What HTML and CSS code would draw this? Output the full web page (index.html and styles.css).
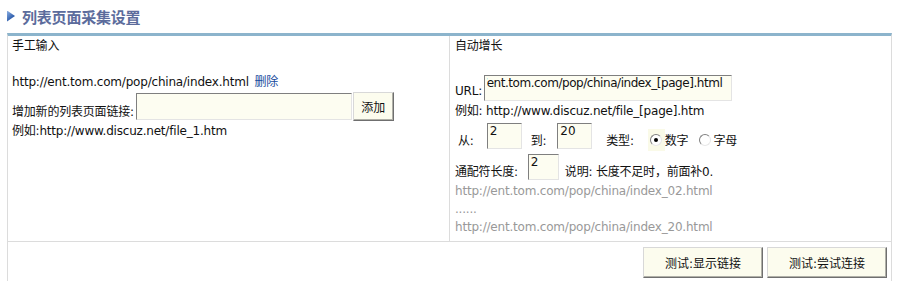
FILE: index.html
```html
<!DOCTYPE html>
<html lang="zh-CN">
<head>
    <meta charset="UTF-8">
    <title>列表页面采集设置</title>
    <link rel="stylesheet" href="styles.css">
</head>
<body>
  <div class="page">
    <div class="title"><span class="arrow"></span>列表页面采集设置</div>

    <div class="panel">
      <div class="cols">
        <div class="cell left">
          <div class="line">手工输入</div>
          <div class="line"></div>
          <div class="line">http://ent.tom.com/pop/china/index.html <a class="del" href="#">删除</a></div>
          <div class="row add-row">
            <span class="lbl">增加新的列表页面链接:</span>
            <input type="text" class="field add-field">
            <button class="btn add-btn">添加</button>
          </div>
          <div class="line">例如:http://www.discuz.net/file_1.htm</div>
        </div>

        <div class="cell right">
          <div class="line">自动增长</div>
          <div class="line"></div>
          <div class="row url-row">
            <span class="lbl">URL:</span>
            <input type="text" class="field url-field" value="/ent.tom.com/pop/china/index_[page].html">
          </div>
          <div class="line">例如: http://www.discuz.net/file_[page].htm</div>
          <div class="row range-row">
            <span class="lbl from">从:</span>
            <input type="text" class="field num" value="2">
            <span class="lbl to">到:</span>
            <input type="text" class="field num" value="20">
            <span class="lbl kind">类型:</span>
            <span class="opt on"><span class="radio checked"></span></span>
            <span class="lbl">数字</span>
            <span class="opt"><span class="radio"></span></span>
            <span class="lbl">字母</span>
          </div>
          <div class="row len-row">
            <span class="lbl">通配符长度:</span>
            <input type="text" class="field num short" value="2">
            <span class="lbl note">说明: 长度不足时，前面补0.</span>
          </div>
          <div class="line muted">http://ent.tom.com/pop/china/index_02.html</div>
          <div class="line muted">......</div>
          <div class="line muted">http://ent.tom.com/pop/china/index_20.html</div>
        </div>
      </div>

      <div class="actions">
        <button class="btn big">测试:显示链接</button>
        <button class="btn big">测试:尝试连接</button>
      </div>
    </div>
  </div>
</body>
</html>
```

FILE: styles.css
```css
body {
  margin: 0;
  background: #fff;
  font-family: "DejaVu Sans", "Noto Sans CJK SC", sans-serif;
  font-size: 12px;
  letter-spacing: -0.2px;
  color: #111;
}

.page {
  padding: 0 7px;
}

.title {
  display: flex;
  align-items: center;
  padding-top: 6px;
  height: 20px;
  margin-bottom: 7px;
  font-family: "Noto Sans CJK SC", sans-serif;
  font-size: 15px;
  font-weight: bold;
  letter-spacing: -0.2px;
  color: #5c6c9c;
}

.arrow {
  width: 8px;
  height: 11px;
  margin-right: 7px;
  background: linear-gradient(135deg, #8fb2e4, #2354a6 70%);
  clip-path: polygon(0 0, 100% 50%, 0 100%);
}

.panel {
  width: 883px;
  border-top: 3px solid #8cb4cc;
  border-left: 1px solid #dcdcdc;
  border-right: 1px solid #dcdcdc;
}

.cols {
  display: grid;
  grid-template-columns: 442px 441px;
  border-bottom: 1px solid #dcdcdc;
}

.cell {
  padding: 1px 4px 5px;
}

.cell.left {
  border-right: 1px solid #dcdcdc;
}

.cell.right {
  padding-left: 5px;
}

.line {
  height: 18px;
  line-height: 18px;
  white-space: nowrap;
}

.muted {
  color: #999;
}

.del {
  margin-left: 2px;
  color: #164a9c;
  text-decoration: none;
}

.row {
  display: flex;
  align-items: flex-end;
  white-space: nowrap;
}

.lbl {
  line-height: 18px;
}

.add-row {
  height: 31px;
  padding-bottom: 1px;
  box-sizing: border-box;
}

.url-row {
  height: 29px;
}

.url-row .lbl {
  margin-bottom: 2px;
  margin-right: 2px;
}

.range-row,
.len-row {
  height: 31px;
}

.range-row .lbl,
.len-row .lbl {
  margin-bottom: 1px;
}

.field {
  box-sizing: border-box;
  height: 26px;
  margin: 0 0 2px;
  padding: 0 2px 10px;
  border: 1px solid;
  border-color: #7f7f7f #e4e4e4 #e4e4e4 #7f7f7f;
  background: #fdfdf1;
  font: inherit;
  line-height: 14px;
  color: #111;
  outline: none;
}

.add-field {
  width: 216px;
  height: 27px;
  margin: 0 0 1px 2px;
}

.url-field {
  width: 248px;
  margin-bottom: 1px;
  letter-spacing: -0.45px;
  text-indent: -4px;
}

.num {
  width: 35px;
}

.num.short {
  width: 31px;
  margin-left: 10px;
}

.from {
  margin-left: 3px;
}

.range-row .num:first-of-type {
  margin-left: 13px;
}

.to {
  margin-left: 9px;
}

.to + .num {
  margin-left: 11px;
}

.kind {
  margin-left: 14px;
}

.opt {
  display: flex;
  align-items: center;
  justify-content: center;
  width: 17px;
  height: 22px;
  margin: 0 0 0 14px;
  background: #fafae8;
}

.opt + .lbl + .opt {
  margin-left: 8px;
  background: #fff;
}

.radio {
  box-sizing: border-box;
  position: relative;
  width: 12px;
  height: 12px;
  border-radius: 50%;
  border: 1px solid;
  border-color: #808080 #e8e8e8 #e8e8e8 #808080;
  background: #fff;
}

.radio.checked::after {
  content: "";
  position: absolute;
  left: 3px;
  top: 3px;
  width: 4px;
  height: 4px;
  border-radius: 50%;
  background: #000;
}

.note {
  margin-left: 6px;
}

.btn {
  box-sizing: border-box;
  padding: 0;
  border: 1px solid;
  border-color: #d8d8d8 #6f6f6f #6f6f6f #d8d8d8;
  box-shadow: inset -1px -1px 0 #b0b0a8;
  background: #fcfcee;
  font: inherit;
  color: #111;
  cursor: pointer;
}

.add-btn {
  width: 41px;
  height: 29px;
  margin-left: 1px;
}

.actions {
  display: flex;
  justify-content: flex-end;
  gap: 4px;
  padding: 5px 4px 6px;
}

.big {
  width: 120px;
  height: 31px;
}
```
